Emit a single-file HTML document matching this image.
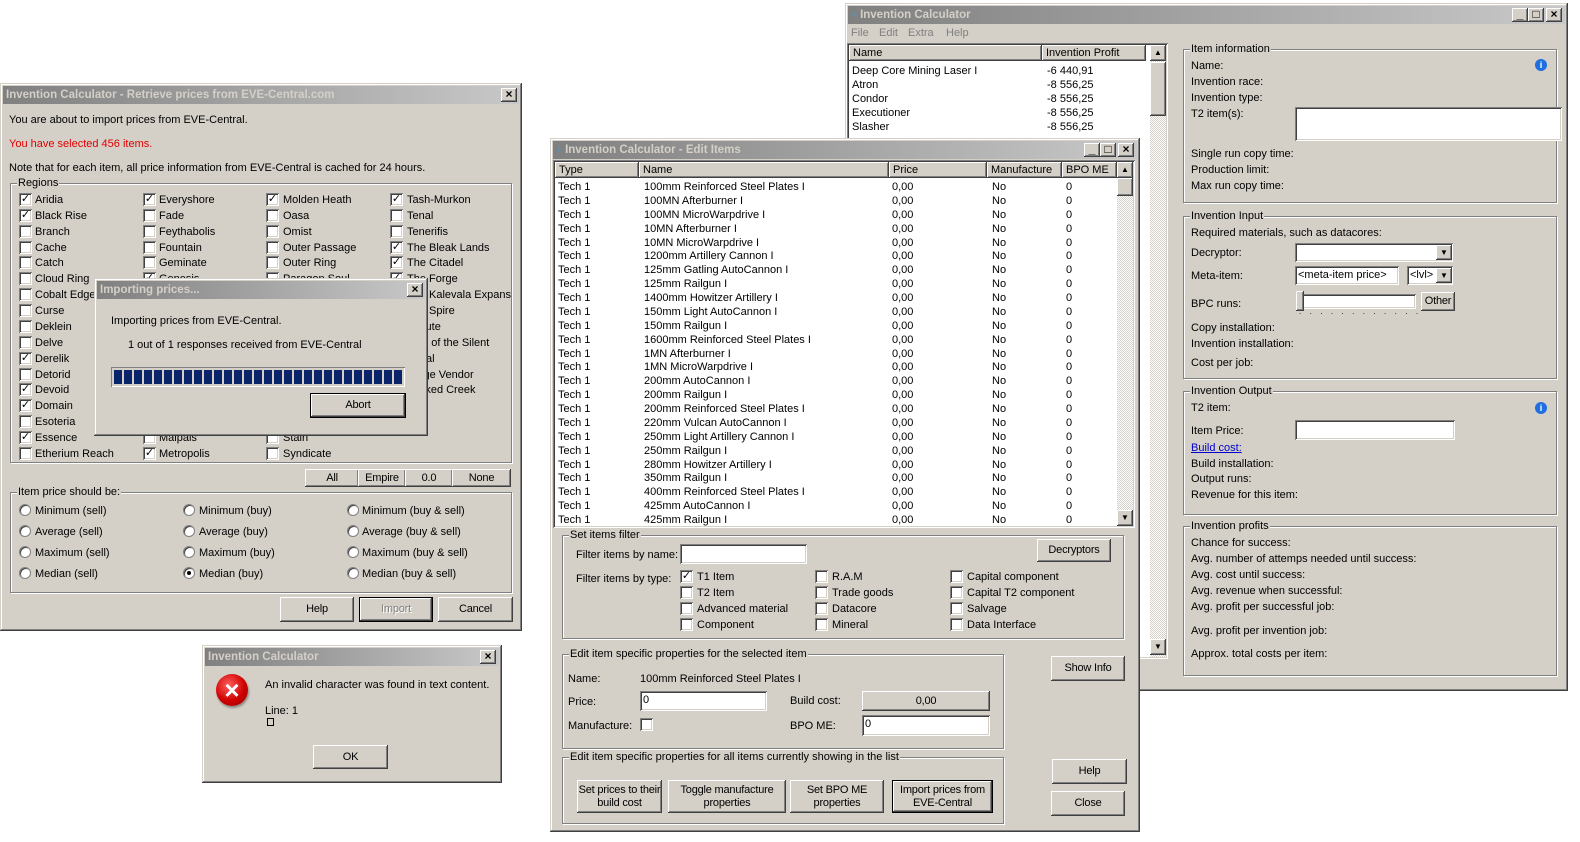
<!DOCTYPE html>
<html><head><meta charset="utf-8">
<style>
*{box-sizing:border-box;margin:0;padding:0}
body{width:1580px;height:842px;background:#fff;position:relative;overflow:hidden;font-family:"Liberation Sans","DejaVu Sans",sans-serif;font-size:11px;color:#000}
.a{position:absolute;white-space:nowrap;line-height:14px;transform:translateY(1px)}
.win{position:absolute;background:#d4d0c8;box-shadow:inset -1px -1px #404040,inset 1px 1px #d4d0c8,inset -2px -2px #808080,inset 2px 2px #fff}
.tb{position:absolute;left:3px;right:3px;top:3px;height:18px;background:linear-gradient(90deg,#808080,#c8c8c8);color:#d4d0c8;font-weight:bold;font-size:11.5px;line-height:18px;padding-left:3px;white-space:nowrap}
.tbb{position:absolute;top:2px;width:16px;height:14px;background:#d4d0c8;box-shadow:inset -1px -1px #404040,inset 1px 1px #fff,inset -2px -2px #808080;color:#000;font-size:12px;line-height:13px;text-align:center;font-weight:bold}
.btn{position:absolute;background:#d4d0c8;box-shadow:inset -1px -1px #404040,inset 1px 1px #fff,inset -2px -2px #808080;display:flex;align-items:center;justify-content:center;text-align:center;line-height:13px;white-space:nowrap;letter-spacing:-0.2px}
.def{outline:1px solid #000;box-shadow:inset -1px -1px #404040,inset 1px 1px #fff,inset -2px -2px #808080}
.fld{position:absolute;background:#fff;box-shadow:inset 1px 1px #808080,inset -1px -1px #fff,inset 2px 2px #404040,inset -2px -2px #d4d0c8;white-space:nowrap;line-height:18px;padding-left:3px}
.cb{position:absolute;width:13px;height:13px;background:#fff;box-shadow:inset 1px 1px #808080,inset -1px -1px #fff,inset 2px 2px #404040,inset -2px -2px #d4d0c8;font-size:11px;line-height:13px;text-align:center;font-weight:bold}
.rd{position:absolute;width:12px;height:12px;border-radius:50%;background:#fff;border:1px solid #808080;box-shadow:inset 1px 1px #404040}
.rd.on::after{content:"";position:absolute;left:3px;top:3px;width:4px;height:4px;border-radius:50%;background:#000}
.grp{position:absolute;border:1px solid #808080;box-shadow:1px 1px #fff,inset 1px 1px #fff}
.gl{position:absolute;top:-8px;left:6px;background:#d4d0c8;padding:0 1px;line-height:14px;white-space:nowrap}
.dith{background:repeating-conic-gradient(#d4d0c8 0 25%,#fff 0 50%) 0 0/2px 2px}
.sbb{position:absolute;width:16px;height:16px;background:#d4d0c8;box-shadow:inset -1px -1px #404040,inset 1px 1px #fff,inset -2px -2px #808080;font-size:8px;line-height:16px;text-align:center}
.hdr{position:absolute;height:16px;background:#d4d0c8;box-shadow:inset -1px -1px #404040,inset 1px 1px #fff,inset -2px -2px #808080;line-height:17px;padding-left:4px;white-space:nowrap}
.row{height:13.875px;line-height:15px;white-space:nowrap;display:flex}
.row span{display:inline-block;overflow:hidden}
</style></head><body>

<!-- MAIN WINDOW -->
<div class="win" style="left:845px;top:3px;width:723px;height:688px">
 <div class="tb"><span style="color:#6a8aa0">&#9830;</span> Invention Calculator
  <div class="tbb" style="left:664px">_</div><div class="tbb" style="left:680px">&#9633;</div><div class="tbb" style="left:698px">&#215;</div>
 </div>
</div>
<div class="a" style="left:851px;top:25px;color:#808080">File</div>
<div class="a" style="left:879px;top:25px;color:#808080">Edit</div>
<div class="a" style="left:908px;top:25px;color:#808080">Extra</div>
<div class="a" style="left:946px;top:25px;color:#808080">Help</div>
<div class="fld" style="left:847px;top:43px;width:321px;height:616px;padding:0"></div>
<div class="hdr" style="left:849px;top:45px;width:193px">Name</div>
<div class="hdr" style="left:1042px;top:45px;width:104px">Invention Profit</div>
<div class="dith" style="position:absolute;left:1150px;top:45px;width:16px;height:612px"></div>
<div class="sbb" style="left:1150px;top:45px">&#9650;</div>
<div class="sbb" style="left:1150px;top:62px;height:54px"></div>
<div class="sbb" style="left:1150px;top:639px">&#9660;</div>
<div class="a" style="left:852px;top:63px">Deep Core Mining Laser I</div><div class="a" style="left:1047px;top:63px">-6 440,91</div>
<div class="a" style="left:852px;top:77px">Atron</div><div class="a" style="left:1047px;top:77px">-8 556,25</div>
<div class="a" style="left:852px;top:91px">Condor</div><div class="a" style="left:1047px;top:91px">-8 556,25</div>
<div class="a" style="left:852px;top:105px">Executioner</div><div class="a" style="left:1047px;top:105px">-8 556,25</div>
<div class="a" style="left:852px;top:119px">Slasher</div><div class="a" style="left:1047px;top:119px">-8 556,25</div>

<div class="grp" style="left:1183px;top:49px;width:374px;height:154px"><div class="gl">Item information</div></div>
<div class="a" style="left:1191px;top:58px">Name:</div>
<div class="a" style="left:1191px;top:74px">Invention race:</div>
<div class="a" style="left:1191px;top:90px">Invention type:</div>
<div class="a" style="left:1191px;top:106px">T2 item(s):</div>
<div class="fld" style="left:1295px;top:107px;width:267px;height:34px"></div>
<div class="a" style="left:1191px;top:146px">Single run copy time:</div>
<div class="a" style="left:1191px;top:162px">Production limit:</div>
<div class="a" style="left:1191px;top:178px">Max run copy time:</div>
<div style="position:absolute;left:1535px;top:59px;width:12px;height:12px;border-radius:50%;background:#1f6fe0;color:#fff;font-size:9px;line-height:12px;text-align:center;font-weight:bold">i</div>

<div class="grp" style="left:1183px;top:216px;width:374px;height:163px"><div class="gl">Invention Input</div></div>
<div class="a" style="left:1191px;top:225px">Required materials, such as datacores:</div>
<div class="a" style="left:1191px;top:245px">Decryptor:</div>
<div class="fld" style="left:1295px;top:243px;width:158px;height:19px"></div>
<div class="sbb" style="left:1436px;top:245px;height:15px;line-height:15px">&#9660;</div>
<div class="a" style="left:1191px;top:268px">Meta-item:</div>
<div class="fld" style="left:1295px;top:266px;width:104px;height:19px">&lt;meta-item price&gt;</div>
<div class="fld" style="left:1407px;top:266px;width:46px;height:19px">&lt;lvl&gt;</div>
<div class="sbb" style="left:1436px;top:268px;height:15px;line-height:15px">&#9660;</div>
<div class="a" style="left:1191px;top:296px">BPC runs:</div>
<div class="fld" style="left:1300px;top:294px;width:116px;height:15px"></div>
<div class="btn" style="left:1296px;top:291px;width:8px;height:20px"></div>
<div class="a" style="left:1299px;top:304px;letter-spacing:8.4px;font-size:8px">............</div>
<div class="btn" style="left:1421px;top:292px;width:34px;height:19px">Other</div>
<div class="a" style="left:1191px;top:320px">Copy installation:</div>
<div class="a" style="left:1191px;top:336px">Invention installation:</div>
<div class="a" style="left:1191px;top:355px">Cost per job:</div>

<div class="grp" style="left:1183px;top:391px;width:374px;height:124px"><div class="gl">Invention Output</div></div>
<div class="a" style="left:1191px;top:400px">T2 item:</div>
<div style="position:absolute;left:1535px;top:402px;width:12px;height:12px;border-radius:50%;background:#1f6fe0;color:#fff;font-size:9px;line-height:12px;text-align:center;font-weight:bold">i</div>
<div class="a" style="left:1191px;top:423px">Item Price:</div>
<div class="fld" style="left:1295px;top:420px;width:160px;height:20px"></div>
<div class="a" style="left:1191px;top:440px;color:#0000cc;text-decoration:underline">Build cost:</div>
<div class="a" style="left:1191px;top:456px">Build installation:</div>
<div class="a" style="left:1191px;top:471px">Output runs:</div>
<div class="a" style="left:1191px;top:487px">Revenue for this item:</div>

<div class="grp" style="left:1183px;top:526px;width:374px;height:150px"><div class="gl">Invention profits</div></div>
<div class="a" style="left:1191px;top:535px">Chance for success:</div>
<div class="a" style="left:1191px;top:551px">Avg. number of attemps needed until success:</div>
<div class="a" style="left:1191px;top:567px">Avg. cost until success:</div>
<div class="a" style="left:1191px;top:583px">Avg. revenue when successful:</div>
<div class="a" style="left:1191px;top:599px">Avg. profit per successful job:</div>
<div class="a" style="left:1191px;top:623px">Avg. profit per invention job:</div>
<div class="a" style="left:1191px;top:646px">Approx. total costs per item:</div>

<!-- EDIT ITEMS WINDOW -->
<div class="win" style="left:550px;top:138px;width:590px;height:694px">
 <div class="tb"><span style="color:#6a8aa0">&#9830;</span> Invention Calculator - Edit Items
  <div class="tbb" style="left:531px">_</div><div class="tbb" style="left:547px">&#9633;</div><div class="tbb" style="left:565px">&#215;</div>
 </div>
</div>
<div class="fld" style="left:553px;top:160px;width:582px;height:368px;padding:0"></div>
<div class="hdr" style="left:555px;top:162px;width:84px">Type</div>
<div class="hdr" style="left:639px;top:162px;width:250px">Name</div>
<div class="hdr" style="left:889px;top:162px;width:98px">Price</div>
<div class="hdr" style="left:987px;top:162px;width:75px">Manufacture</div>
<div class="hdr" style="left:1062px;top:162px;width:55px">BPO ME</div>
<div class="dith" style="position:absolute;left:1117px;top:162px;width:16px;height:364px"></div>
<div class="sbb" style="left:1117px;top:162px">&#9650;</div>
<div class="sbb" style="left:1117px;top:178px;height:18px"></div>
<div class="sbb" style="left:1117px;top:510px">&#9660;</div>
<div style="position:absolute;left:558px;top:180px;width:558px;overflow:hidden;height:346px">
<div class="row"><span style="width:86px">Tech 1</span><span style="width:248px">100mm Reinforced Steel Plates I</span><span style="width:100px">0,00</span><span style="width:74px">No</span><span>0</span></div>
<div class="row"><span style="width:86px">Tech 1</span><span style="width:248px">100MN Afterburner I</span><span style="width:100px">0,00</span><span style="width:74px">No</span><span>0</span></div>
<div class="row"><span style="width:86px">Tech 1</span><span style="width:248px">100MN MicroWarpdrive I</span><span style="width:100px">0,00</span><span style="width:74px">No</span><span>0</span></div>
<div class="row"><span style="width:86px">Tech 1</span><span style="width:248px">10MN Afterburner I</span><span style="width:100px">0,00</span><span style="width:74px">No</span><span>0</span></div>
<div class="row"><span style="width:86px">Tech 1</span><span style="width:248px">10MN MicroWarpdrive I</span><span style="width:100px">0,00</span><span style="width:74px">No</span><span>0</span></div>
<div class="row"><span style="width:86px">Tech 1</span><span style="width:248px">1200mm Artillery Cannon I</span><span style="width:100px">0,00</span><span style="width:74px">No</span><span>0</span></div>
<div class="row"><span style="width:86px">Tech 1</span><span style="width:248px">125mm Gatling AutoCannon I</span><span style="width:100px">0,00</span><span style="width:74px">No</span><span>0</span></div>
<div class="row"><span style="width:86px">Tech 1</span><span style="width:248px">125mm Railgun I</span><span style="width:100px">0,00</span><span style="width:74px">No</span><span>0</span></div>
<div class="row"><span style="width:86px">Tech 1</span><span style="width:248px">1400mm Howitzer Artillery I</span><span style="width:100px">0,00</span><span style="width:74px">No</span><span>0</span></div>
<div class="row"><span style="width:86px">Tech 1</span><span style="width:248px">150mm Light AutoCannon I</span><span style="width:100px">0,00</span><span style="width:74px">No</span><span>0</span></div>
<div class="row"><span style="width:86px">Tech 1</span><span style="width:248px">150mm Railgun I</span><span style="width:100px">0,00</span><span style="width:74px">No</span><span>0</span></div>
<div class="row"><span style="width:86px">Tech 1</span><span style="width:248px">1600mm Reinforced Steel Plates I</span><span style="width:100px">0,00</span><span style="width:74px">No</span><span>0</span></div>
<div class="row"><span style="width:86px">Tech 1</span><span style="width:248px">1MN Afterburner I</span><span style="width:100px">0,00</span><span style="width:74px">No</span><span>0</span></div>
<div class="row"><span style="width:86px">Tech 1</span><span style="width:248px">1MN MicroWarpdrive I</span><span style="width:100px">0,00</span><span style="width:74px">No</span><span>0</span></div>
<div class="row"><span style="width:86px">Tech 1</span><span style="width:248px">200mm AutoCannon I</span><span style="width:100px">0,00</span><span style="width:74px">No</span><span>0</span></div>
<div class="row"><span style="width:86px">Tech 1</span><span style="width:248px">200mm Railgun I</span><span style="width:100px">0,00</span><span style="width:74px">No</span><span>0</span></div>
<div class="row"><span style="width:86px">Tech 1</span><span style="width:248px">200mm Reinforced Steel Plates I</span><span style="width:100px">0,00</span><span style="width:74px">No</span><span>0</span></div>
<div class="row"><span style="width:86px">Tech 1</span><span style="width:248px">220mm Vulcan AutoCannon I</span><span style="width:100px">0,00</span><span style="width:74px">No</span><span>0</span></div>
<div class="row"><span style="width:86px">Tech 1</span><span style="width:248px">250mm Light Artillery Cannon I</span><span style="width:100px">0,00</span><span style="width:74px">No</span><span>0</span></div>
<div class="row"><span style="width:86px">Tech 1</span><span style="width:248px">250mm Railgun I</span><span style="width:100px">0,00</span><span style="width:74px">No</span><span>0</span></div>
<div class="row"><span style="width:86px">Tech 1</span><span style="width:248px">280mm Howitzer Artillery I</span><span style="width:100px">0,00</span><span style="width:74px">No</span><span>0</span></div>
<div class="row"><span style="width:86px">Tech 1</span><span style="width:248px">350mm Railgun I</span><span style="width:100px">0,00</span><span style="width:74px">No</span><span>0</span></div>
<div class="row"><span style="width:86px">Tech 1</span><span style="width:248px">400mm Reinforced Steel Plates I</span><span style="width:100px">0,00</span><span style="width:74px">No</span><span>0</span></div>
<div class="row"><span style="width:86px">Tech 1</span><span style="width:248px">425mm AutoCannon I</span><span style="width:100px">0,00</span><span style="width:74px">No</span><span>0</span></div>
<div class="row"><span style="width:86px">Tech 1</span><span style="width:248px">425mm Railgun I</span><span style="width:100px">0,00</span><span style="width:74px">No</span><span>0</span></div>
</div>

<div class="grp" style="left:562px;top:535px;width:562px;height:104px"><div class="gl">Set items filter</div></div>
<div class="a" style="left:576px;top:547px">Filter items by name:</div>
<div class="fld" style="left:680px;top:544px;width:127px;height:20px"></div>
<div class="btn" style="left:1037px;top:539px;width:74px;height:23px">Decryptors</div>
<div class="a" style="left:576px;top:571px">Filter items by type:</div>
<div class="cb" style="left:680px;top:570px">&#10003;</div><div class="a" style="left:697px;top:569px">T1 Item</div>
<div class="cb" style="left:680px;top:586px"></div><div class="a" style="left:697px;top:585px">T2 Item</div>
<div class="cb" style="left:680px;top:602px"></div><div class="a" style="left:697px;top:601px">Advanced material</div>
<div class="cb" style="left:680px;top:618px"></div><div class="a" style="left:697px;top:617px">Component</div>
<div class="cb" style="left:815px;top:570px"></div><div class="a" style="left:832px;top:569px">R.A.M</div>
<div class="cb" style="left:815px;top:586px"></div><div class="a" style="left:832px;top:585px">Trade goods</div>
<div class="cb" style="left:815px;top:602px"></div><div class="a" style="left:832px;top:601px">Datacore</div>
<div class="cb" style="left:815px;top:618px"></div><div class="a" style="left:832px;top:617px">Mineral</div>
<div class="cb" style="left:950px;top:570px"></div><div class="a" style="left:967px;top:569px">Capital component</div>
<div class="cb" style="left:950px;top:586px"></div><div class="a" style="left:967px;top:585px">Capital T2 component</div>
<div class="cb" style="left:950px;top:602px"></div><div class="a" style="left:967px;top:601px">Salvage</div>
<div class="cb" style="left:950px;top:618px"></div><div class="a" style="left:967px;top:617px">Data Interface</div>

<div class="grp" style="left:562px;top:654px;width:442px;height:95px"><div class="gl">Edit item specific properties for the selected item</div></div>
<div class="a" style="left:568px;top:671px">Name:</div>
<div class="a" style="left:640px;top:671px">100mm Reinforced Steel Plates I</div>
<div class="a" style="left:568px;top:694px">Price:</div>
<div class="fld" style="left:640px;top:691px;width:127px;height:20px">0</div>
<div class="a" style="left:568px;top:718px">Manufacture:</div>
<div class="cb" style="left:640px;top:718px"></div>
<div class="a" style="left:790px;top:693px">Build cost:</div>
<div class="btn" style="left:862px;top:691px;width:128px;height:20px">0,00</div>
<div class="a" style="left:790px;top:718px">BPO ME:</div>
<div class="fld" style="left:862px;top:715px;width:128px;height:21px">0</div>
<div class="btn" style="left:1051px;top:656px;width:74px;height:25px">Show Info</div>

<div class="grp" style="left:562px;top:757px;width:442px;height:67px"><div class="gl">Edit item specific properties for all items currently showing in the list</div></div>
<div class="btn" style="left:577px;top:780px;width:85px;height:33px">Set prices to their<br>build cost</div>
<div class="btn" style="left:668px;top:780px;width:118px;height:33px">Toggle manufacture<br>properties</div>
<div class="btn" style="left:790px;top:780px;width:94px;height:33px">Set BPO ME<br>properties</div>
<div class="btn def" style="left:893px;top:781px;width:99px;height:31px">Import prices from<br>EVE-Central</div>
<div class="btn" style="left:1052px;top:759px;width:75px;height:25px">Help</div>
<div class="btn" style="left:1051px;top:791px;width:74px;height:25px">Close</div>

<!-- RETRIEVE WINDOW -->
<div class="win" style="left:0px;top:83px;width:522px;height:548px">
 <div class="tb">Invention Calculator - Retrieve prices from EVE-Central.com
  <div class="tbb" style="left:498px">&#215;</div>
 </div>
</div>
<div class="a" style="left:9px;top:112px">You are about to import prices from EVE-Central.</div>
<div class="a" style="left:9px;top:136px;color:#e00000">You have selected 456 items.</div>
<div class="a" style="left:9px;top:160px">Note that for each item, all price information from EVE-Central is cached for 24 hours.</div>
<div class="grp" style="left:10px;top:183px;width:502px;height:280px"><div class="gl">Regions</div></div>

<div class="cb" style="left:19px;top:193px">&#10003;</div><div class="a" style="left:35px;top:192px">Aridia</div>
<div class="cb" style="left:19px;top:209px">&#10003;</div><div class="a" style="left:35px;top:208px">Black Rise</div>
<div class="cb" style="left:19px;top:225px"></div><div class="a" style="left:35px;top:224px">Branch</div>
<div class="cb" style="left:19px;top:241px"></div><div class="a" style="left:35px;top:240px">Cache</div>
<div class="cb" style="left:19px;top:256px"></div><div class="a" style="left:35px;top:255px">Catch</div>
<div class="cb" style="left:19px;top:272px"></div><div class="a" style="left:35px;top:271px">Cloud Ring</div>
<div class="cb" style="left:19px;top:288px"></div><div class="a" style="left:35px;top:287px">Cobalt Edge</div>
<div class="cb" style="left:19px;top:304px"></div><div class="a" style="left:35px;top:303px">Curse</div>
<div class="cb" style="left:19px;top:320px"></div><div class="a" style="left:35px;top:319px">Deklein</div>
<div class="cb" style="left:19px;top:336px"></div><div class="a" style="left:35px;top:335px">Delve</div>
<div class="cb" style="left:19px;top:352px">&#10003;</div><div class="a" style="left:35px;top:351px">Derelik</div>
<div class="cb" style="left:19px;top:368px"></div><div class="a" style="left:35px;top:367px">Detorid</div>
<div class="cb" style="left:19px;top:383px">&#10003;</div><div class="a" style="left:35px;top:382px">Devoid</div>
<div class="cb" style="left:19px;top:399px">&#10003;</div><div class="a" style="left:35px;top:398px">Domain</div>
<div class="cb" style="left:19px;top:415px"></div><div class="a" style="left:35px;top:414px">Esoteria</div>
<div class="cb" style="left:19px;top:431px">&#10003;</div><div class="a" style="left:35px;top:430px">Essence</div>
<div class="cb" style="left:19px;top:447px"></div><div class="a" style="left:35px;top:446px">Etherium Reach</div>

<div class="cb" style="left:143px;top:193px">&#10003;</div><div class="a" style="left:159px;top:192px">Everyshore</div>
<div class="cb" style="left:143px;top:209px"></div><div class="a" style="left:159px;top:208px">Fade</div>
<div class="cb" style="left:143px;top:225px"></div><div class="a" style="left:159px;top:224px">Feythabolis</div>
<div class="cb" style="left:143px;top:241px"></div><div class="a" style="left:159px;top:240px">Fountain</div>
<div class="cb" style="left:143px;top:256px"></div><div class="a" style="left:159px;top:255px">Geminate</div>
<div class="cb" style="left:143px;top:272px">&#10003;</div><div class="a" style="left:159px;top:271px">Genesis</div>
<div class="cb" style="left:143px;top:288px"></div><div class="a" style="left:159px;top:287px">Great Wildlands</div>
<div class="cb" style="left:143px;top:304px"></div><div class="a" style="left:159px;top:303px">Heimatar</div>
<div class="cb" style="left:143px;top:320px"></div><div class="a" style="left:159px;top:319px">Immensea</div>
<div class="cb" style="left:143px;top:336px"></div><div class="a" style="left:159px;top:335px">Impass</div>
<div class="cb" style="left:143px;top:352px"></div><div class="a" style="left:159px;top:351px">Insmother</div>
<div class="cb" style="left:143px;top:368px"></div><div class="a" style="left:159px;top:367px">Kador</div>
<div class="cb" style="left:143px;top:383px"></div><div class="a" style="left:159px;top:382px">Khanid</div>
<div class="cb" style="left:143px;top:399px"></div><div class="a" style="left:159px;top:398px">Kor-Azor</div>
<div class="cb" style="left:143px;top:415px"></div><div class="a" style="left:159px;top:414px">Lonetrek</div>
<div class="cb" style="left:143px;top:431px"></div><div class="a" style="left:159px;top:430px">Malpais</div>
<div class="cb" style="left:143px;top:447px">&#10003;</div><div class="a" style="left:159px;top:446px">Metropolis</div>

<div class="cb" style="left:266px;top:193px">&#10003;</div><div class="a" style="left:283px;top:192px">Molden Heath</div>
<div class="cb" style="left:266px;top:209px"></div><div class="a" style="left:283px;top:208px">Oasa</div>
<div class="cb" style="left:266px;top:225px"></div><div class="a" style="left:283px;top:224px">Omist</div>
<div class="cb" style="left:266px;top:241px"></div><div class="a" style="left:283px;top:240px">Outer Passage</div>
<div class="cb" style="left:266px;top:256px"></div><div class="a" style="left:283px;top:255px">Outer Ring</div>
<div class="cb" style="left:266px;top:272px"></div><div class="a" style="left:283px;top:271px">Paragon Soul</div>
<div class="cb" style="left:266px;top:288px"></div><div class="a" style="left:283px;top:287px">Period Basis</div>
<div class="cb" style="left:266px;top:304px"></div><div class="a" style="left:283px;top:303px">Perrigen Falls</div>
<div class="cb" style="left:266px;top:320px"></div><div class="a" style="left:283px;top:319px">Placid</div>
<div class="cb" style="left:266px;top:336px"></div><div class="a" style="left:283px;top:335px">Providence</div>
<div class="cb" style="left:266px;top:352px"></div><div class="a" style="left:283px;top:351px">Pure Blind</div>
<div class="cb" style="left:266px;top:368px"></div><div class="a" style="left:283px;top:367px">Querious</div>
<div class="cb" style="left:266px;top:383px"></div><div class="a" style="left:283px;top:382px">Scalding Pass</div>
<div class="cb" style="left:266px;top:399px"></div><div class="a" style="left:283px;top:398px">Sinq Laison</div>
<div class="cb" style="left:266px;top:415px"></div><div class="a" style="left:283px;top:414px">Solitude</div>
<div class="cb" style="left:266px;top:431px"></div><div class="a" style="left:283px;top:430px">Stain</div>
<div class="cb" style="left:266px;top:447px"></div><div class="a" style="left:283px;top:446px">Syndicate</div>

<div class="cb" style="left:390px;top:193px">&#10003;</div><div class="a" style="left:407px;top:192px">Tash-Murkon</div>
<div class="cb" style="left:390px;top:209px"></div><div class="a" style="left:407px;top:208px">Tenal</div>
<div class="cb" style="left:390px;top:225px"></div><div class="a" style="left:407px;top:224px">Tenerifis</div>
<div class="cb" style="left:390px;top:241px">&#10003;</div><div class="a" style="left:407px;top:240px">The Bleak Lands</div>
<div class="cb" style="left:390px;top:256px">&#10003;</div><div class="a" style="left:407px;top:255px">The Citadel</div>
<div class="cb" style="left:390px;top:272px">&#10003;</div><div class="a" style="left:407px;top:271px">The Forge</div>
<div class="cb" style="left:390px;top:288px"></div><div class="a" style="left:407px;top:287px">The Kalevala Expans</div>
<div class="cb" style="left:390px;top:304px"></div><div class="a" style="left:407px;top:303px">The Spire</div>
<div class="cb" style="left:390px;top:320px"></div><div class="a" style="left:407px;top:319px">Tribute</div>
<div class="cb" style="left:390px;top:336px"></div><div class="a" style="left:407px;top:335px">Vale of the Silent</div>
<div class="cb" style="left:390px;top:352px"></div><div class="a" style="left:407px;top:351px">Venal</div>
<div class="cb" style="left:390px;top:368px"></div><div class="a" style="left:407px;top:367px">Verge Vendor</div>
<div class="cb" style="left:390px;top:383px"></div><div class="a" style="left:407px;top:382px">Wicked Creek</div>

<div class="btn" style="left:305px;top:469px;width:54px;height:18px">All</div>
<div class="btn" style="left:358px;top:469px;width:48px;height:18px">Empire</div>
<div class="btn" style="left:405px;top:469px;width:48px;height:18px">0.0</div>
<div class="btn" style="left:452px;top:469px;width:59px;height:18px">None</div>

<div class="grp" style="left:10px;top:492px;width:502px;height:101px"><div class="gl">Item price should be:</div></div>
<div class="rd" style="left:19px;top:504px"></div><div class="a" style="left:35px;top:503px">Minimum (sell)</div>
<div class="rd" style="left:19px;top:525px"></div><div class="a" style="left:35px;top:524px">Average (sell)</div>
<div class="rd" style="left:19px;top:546px"></div><div class="a" style="left:35px;top:545px">Maximum (sell)</div>
<div class="rd" style="left:19px;top:567px"></div><div class="a" style="left:35px;top:566px">Median (sell)</div>
<div class="rd" style="left:183px;top:504px"></div><div class="a" style="left:199px;top:503px">Minimum (buy)</div>
<div class="rd" style="left:183px;top:525px"></div><div class="a" style="left:199px;top:524px">Average (buy)</div>
<div class="rd" style="left:183px;top:546px"></div><div class="a" style="left:199px;top:545px">Maximum (buy)</div>
<div class="rd on" style="left:183px;top:567px"></div><div class="a" style="left:199px;top:566px">Median (buy)</div>
<div class="rd" style="left:347px;top:504px"></div><div class="a" style="left:362px;top:503px">Minimum (buy &amp; sell)</div>
<div class="rd" style="left:347px;top:525px"></div><div class="a" style="left:362px;top:524px">Average (buy &amp; sell)</div>
<div class="rd" style="left:347px;top:546px"></div><div class="a" style="left:362px;top:545px">Maximum (buy &amp; sell)</div>
<div class="rd" style="left:347px;top:567px"></div><div class="a" style="left:362px;top:566px">Median (buy &amp; sell)</div>

<div class="btn" style="left:280px;top:597px;width:74px;height:25px">Help</div>
<div class="btn def" style="left:360px;top:598px;width:72px;height:23px;color:#808080;text-shadow:1px 1px #fff">Import</div>
<div class="btn" style="left:438px;top:597px;width:75px;height:25px">Cancel</div>

<!-- IMPORTING DIALOG -->
<div class="win" style="left:94px;top:278px;width:334px;height:158px">
 <div class="tb">Importing prices...
  <div class="tbb" style="left:310px">&#215;</div>
 </div>
</div>
<div class="a" style="left:111px;top:313px">Importing prices from EVE-Central.</div>
<div class="a" style="left:128px;top:337px">1 out of 1 responses received from EVE-Central</div>
<div style="position:absolute;left:111px;top:367px;width:294px;height:20px;background:#d4d0c8;box-shadow:inset 1px 1px #808080,inset -1px -1px #fff"></div>
<div style="position:absolute;left:114px;top:370px;width:288px;height:14px;background:repeating-linear-gradient(90deg,#0a246a 0 8px,transparent 8px 10px)"></div>
<div class="btn def" style="left:311px;top:394px;width:94px;height:23px">Abort</div>

<!-- ERROR DIALOG -->
<div class="win" style="left:202px;top:645px;width:300px;height:138px">
 <div class="tb">Invention Calculator
  <div class="tbb" style="left:275px">&#215;</div>
 </div>
</div>
<div style="position:absolute;left:216px;top:674px;width:32px;height:32px;border-radius:50%;background:radial-gradient(circle at 40% 35%,#ff6060,#d00000 55%,#900000);color:#fff;font-size:26px;font-weight:bold;line-height:32px;text-align:center;box-shadow:1px 2px 2px rgba(0,0,0,.35)">&#215;</div>
<div class="a" style="left:265px;top:677px">An invalid character was found in text content.</div>
<div class="a" style="left:265px;top:703px">Line: 1</div>
<div style="position:absolute;left:267px;top:718px;width:7px;height:8px;border:1px solid #000"></div>
<div class="btn" style="left:313px;top:745px;width:75px;height:24px">OK</div>

</body></html>
